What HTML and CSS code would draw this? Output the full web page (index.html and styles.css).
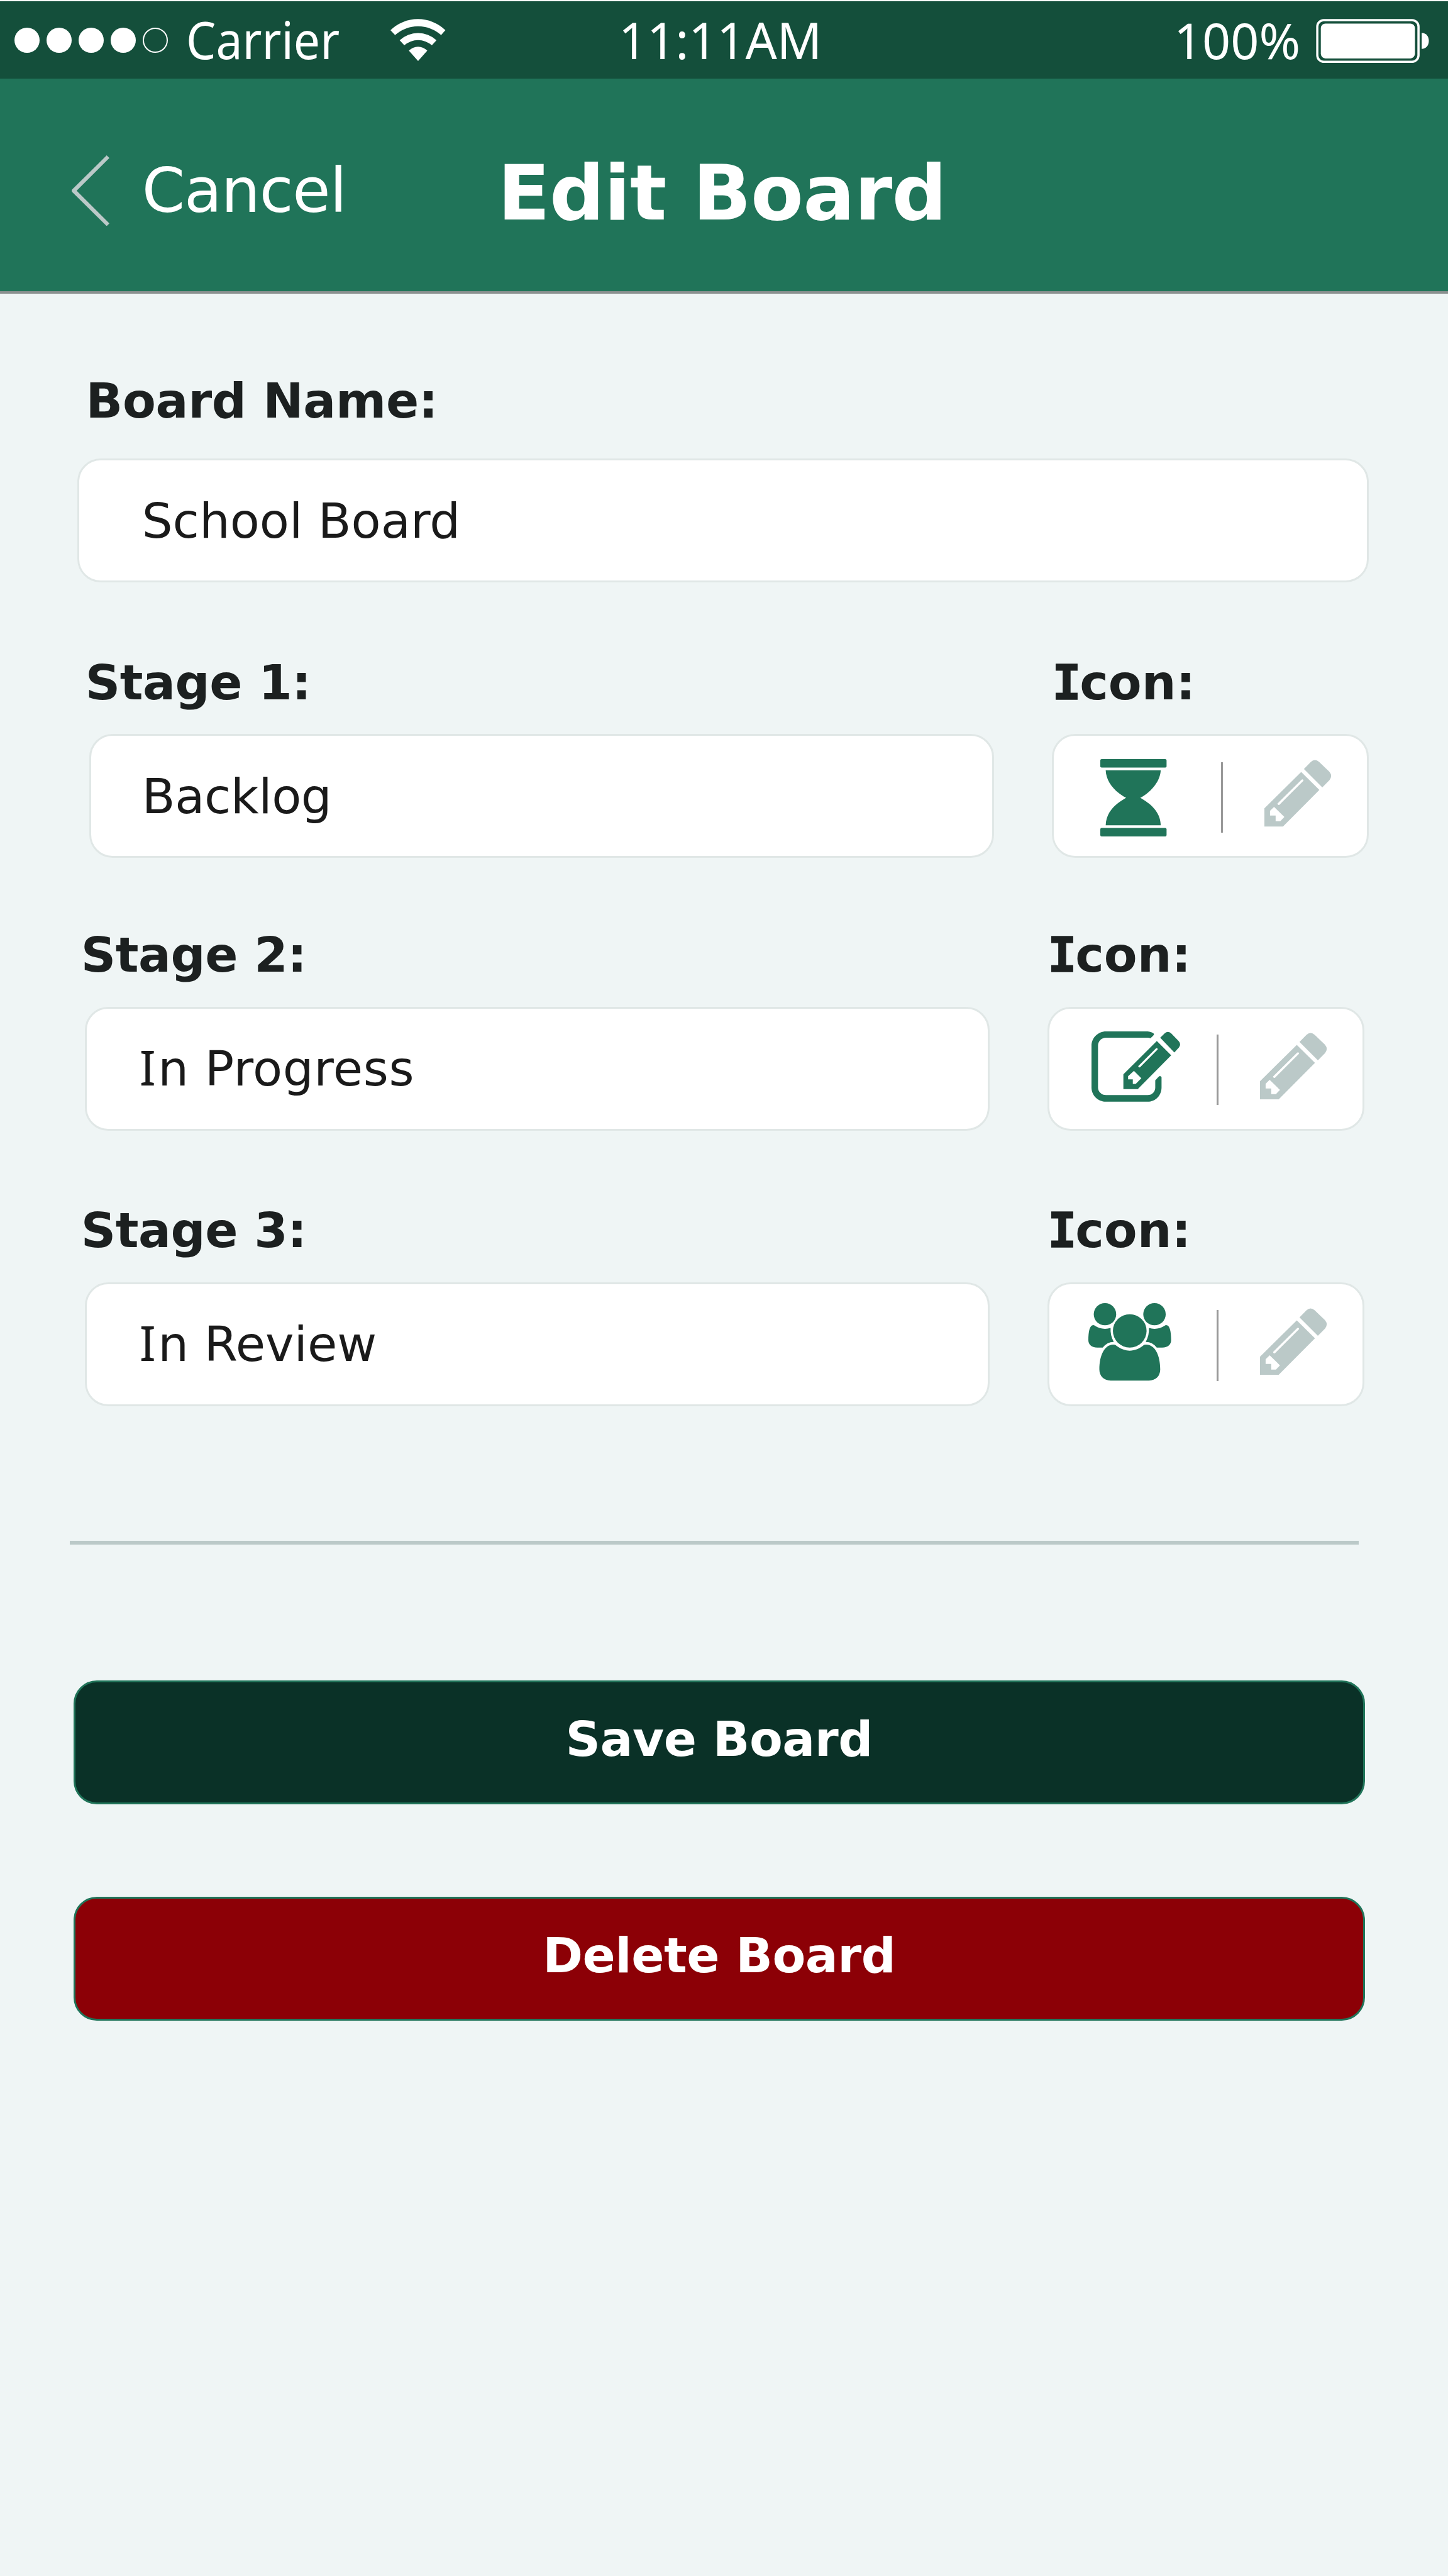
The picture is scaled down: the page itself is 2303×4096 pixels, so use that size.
FILE: index.html
```html
<!DOCTYPE html>
<html lang="en">
<head>
<meta charset="utf-8">
<title>Edit Board</title>
<link rel="stylesheet" href="styles.css">
</head>
<body>
<svg class="defs" aria-hidden="true">
  <symbol id="pencil" viewBox="1009 718 299 434" preserveAspectRatio="none">
    <path fill-rule="evenodd" d="M1185 778L1216 732Q1234 708 1253 732L1299 796Q1314 823 1299 850L1267 897ZM1173 797L1254 914L1091 1152H1009V1033ZM1174 848L1067 1002Q1069 1014 1075 1011L1183 855V850Q1179 841 1174 848ZM1052 1024L1034 1049V1080H1059V1116H1080L1098 1089Z"/>
  </symbol>
</svg>

<div class="status-bar">
  <div class="signal">
    <span class="dot"></span><span class="dot"></span><span class="dot"></span><span class="dot"></span><span class="dot dot-empty"></span>
  </div>
  <span class="carrier">Carrier</span>
  <svg class="wifi" viewBox="843 40 119 91">
    <path d="M843 64.4A85.4 85.4 0 0 1 961.7 64.4L952.5 75A74.6 74.6 0 0 0 853 75ZM862.9 86.3A58.6 58.6 0 0 1 942.5 86.3L932.5 97.2A45 45 0 0 0 872.9 97.2ZM882.8 108.6A27.8 27.8 0 0 1 922.6 108.6L902.7 130.9Z"/>
  </svg>
  <span class="clock">11:11AM</span>
  <span class="percent">100%</span>
  <svg class="battery" viewBox="2840 40 244 96">
    <rect class="battery-case" x="2842.8" y="42.8" width="218.6" height="90" rx="14"/>
    <rect x="2850.4" y="50.1" width="203.3" height="75.3" rx="10"/>
    <path d="M3068.3 70.3C3077 70.3 3083.7 77 3083.7 87.5S3077 104.8 3068.3 104.8Z"/>
  </svg>
</div>

<header class="nav-bar">
  <svg class="chevron" viewBox="154.5 334.6 81.6 152.8">
    <path d="M230.2 334.6L236.1 340.1L165.2 410.8L236.1 481.5L230.2 487.4L155.5 413.5Q153.5 411 155.5 408.2Z"/>
  </svg>
  <span class="cancel">Cancel</span>
  <h1 class="title">Edit Board</h1>
</header>

<main class="form">
  <div class="label board-label">Board Name:</div>
  <div class="field board-field">School Board</div>

  <section class="stage stage-1">
    <div class="label">Stage 1:</div>
    <div class="label icon-label"><span class="cap-i">I</span>con:</div>
    <div class="field">Backlog</div>
    <div class="icon-box">
      <svg class="hourglass" viewBox="279 711 295 501" preserveAspectRatio="none">
        <rect x="279" y="711" width="295" height="55" rx="6" ry="8"/>
        <rect x="279" y="1157" width="295" height="55" rx="6" ry="8"/>
        <path d="M303 783H548C546 850 510 920 457 962C510 1005 547 1060 548 1140H303C305 1060 340 1005 394 962C340 920 305 855 303 783Z"/>
      </svg>
      <span class="divider"></span>
      <svg class="pencil"><use href="#pencil"/></svg>
    </div>
  </section>

  <section class="stage stage-2">
    <div class="label">Stage 2:</div>
    <div class="label icon-label"><span class="cap-i">I</span>con:</div>
    <div class="field"><span class="cap-i">I</span>n Progress</div>
    <div class="icon-box">
      <svg class="compose" viewBox="237 707 396 455" preserveAspectRatio="none">
        <path d="M302 707H487Q505 709 515 722Q518 730 499 752Q495 748 487 748H302C282 748 266 770 266 800V1070C266 1098 282 1119 302 1119H487C507 1119 521 1098 521 1070V1023L537 999Q544 992 549 1003V1070C549 1121 522 1162 487 1162H302C266 1162 237 1121 237 1070V800C237 749 266 707 302 707Z"/>
        <path fill-rule="evenodd" d="M543 748L564 718Q577 702 591 718L625 769Q638 790 626 812L606 843ZM528 769L592 862L443 1080H379V985ZM524 817L445 932Q447 945 454 938L531 825L532 821Q530 811 524 817ZM426 962L400 997V1017H421V1047H434L459 1010Z"/>
      </svg>
      <span class="divider"></span>
      <svg class="pencil"><use href="#pencil"/></svg>
    </div>
  </section>

  <section class="stage stage-3">
    <div class="label">Stage 3:</div>
    <div class="label icon-label"><span class="cap-i">I</span>con:</div>
    <div class="field"><span class="cap-i">I</span>n Review</div>
    <div class="icon-box">
      <svg class="people" viewBox="225 665 369 502" preserveAspectRatio="none">
        <ellipse cx="299" cy="737" rx="50" ry="72"/>
        <ellipse cx="519.5" cy="737" rx="50" ry="72"/>
        <ellipse cx="409.3" cy="845" rx="75" ry="108"/>
        <path id="side" d="M247 808Q251 808 254 812Q275 832 299 832Q312 832 324 826Q322 875 338 916Q308 916 289 953H265C238 953 225 930 225 905C225 850 231 808 247 808Z"/>
        <use href="#side" transform="translate(818.6 0) scale(-1 1)"/>
        <path d="M335 934Q344 933 347 938C367 961 388 973 409 973C430 973 452 961 471 938Q474 933 483 934C520 934 545 1000 545 1095C545 1137 525 1167 495 1167H324C294 1167 274 1137 274 1095C274 1000 298 936 335 934Z"/>
      </svg>
      <span class="divider"></span>
      <svg class="pencil"><use href="#pencil"/></svg>
    </div>
  </section>

  <hr class="rule">
  <button class="button save">Save Board</button>
  <button class="button delete">Delete Board</button>
</main>
</body>
</html>
```
FILE: styles.css
```css
* { box-sizing: border-box; }

body {
  margin: 0;
  width: 2303px;
  height: 4096px;
  overflow: hidden;
  background: #eff5f5;
  color: #1c2020;
  font-family: "DejaVu Sans", Verdana, sans-serif;
}

.defs { display: block; width: 0; height: 0; }

/* Status bar */
.status-bar {
  display: flex;
  align-items: flex-start;
  height: 125px;
  border-top: 2px solid #fbfdfd;
  background: #144f3b;
  color: #fff;
  fill: #fff;
  font-family: "Noto Sans", sans-serif;
  white-space: nowrap;
}
.signal { display: flex; gap: 11.1px; width: 273.5px; margin: 42.4px 0 0 22.5px; }
.dot { width: 40px; height: 40px; border-radius: 50%; background: #fff; }
.dot-empty { background: none; border: 2px solid #fff; }
.carrier { width: 325.3px; font-size: 82px; line-height: 121px; transform: scaleX(.915); transform-origin: left; }
.wifi { width: 87.6px; height: 67px; margin-top: 27.5px; }
.clock { width: 883px; margin-left: 275px; font-size: 80px; line-height: 122px; transform: scaleX(.985); transform-origin: left; }
.percent { width: 226.5px; font-size: 79px; line-height: 124px; }
.battery { width: 179.8px; height: 70.7px; margin-top: 27.5px; }
.battery-case { fill: none; stroke: #fff; stroke-width: 4.8; }

/* Navigation bar */
.nav-bar {
  display: flex;
  align-items: flex-start;
  height: 342px;
  padding-left: 114px;
  border-bottom: 4px solid #8a908f;
  background: #207459;
  color: #fff;
  line-height: 338px;
  white-space: nowrap;
}
.chevron { width: 60px; height: 112.6px; margin-top: 121.6px; fill: #bbc9c8; }
.cancel { width: 565.7px; margin: 9px 0 0 51.7px; font-size: 98px; letter-spacing: -1.2px; }
.title { margin: 12.5px 0 0; font-size: 122px; font-weight: bold; letter-spacing: -.6px; }

/* Form */
.form { padding-top: 121.4px; }
.label { font-size: 77px; font-weight: bold; line-height: 100px; white-space: nowrap; }
.board-label { margin-left: 136.5px; letter-spacing: -.3px; }
.field, .icon-box {
  height: 197px;
  border: 3px solid #e0e7e6;
  border-radius: 37px;
  background: #fff;
}
.field { padding: 1px 0 0 79.7px; color: #1a1a1a; font-size: 77px; line-height: 191px; white-space: nowrap; }
.board-field { width: 2054px; margin: 41.1px 0 0 123px; padding-left: 99.7px; }

.stage {
  display: grid;
  grid-template-columns: 1438.5px 503.7px;
  column-gap: 92.5px;
  row-gap: 31.7px;
  margin-left: 135.3px;
}
.stage .label { margin-left: -6.5px; letter-spacing: -.5px; }
.stage .icon-label { margin-left: 0; letter-spacing: 0; }
.stage-1 { margin: 109.2px 0 0 142.3px; }
.stage-1 .field { padding-left: 80.5px; letter-spacing: -.4px; }
.stage-2 { margin-top: 104.6px; }
.stage-3 { margin-top: 109.6px; }
.stage-2 .field, .stage-3 .field { padding-top: 0; padding-left: 83.5px; }
.stage-2 .field { letter-spacing: .6px; }

/* Capital I with slab serifs */
.cap-i { font-family: "Noto Sans", sans-serif; letter-spacing: 3.4px; line-height: 0; }
.label .cap-i { font-family: "DejaVu Sans Mono", monospace; letter-spacing: -2.5px; -webkit-text-stroke: 1.5px #1c2020; }

.icon-box { display: flex; align-items: flex-start; fill: #207459; }
.hourglass { width: 105.4px; height: 123px; margin: 36.3px 86.1px 0 74.2px; }
.compose { width: 141.4px; height: 111.8px; margin: 36.8px 57.9px 0 66.4px; }
.people { width: 131.8px; height: 123.3px; margin: 30.4px 71.9px 0 62px; }
.divider { width: 3.5px; height: 112.5px; margin-top: 41.3px; background: #999; }
.pencil { width: 106.7px; height: 106.5px; margin: 38px 0 0 65.7px; fill: #bbc9c8; }

.rule { width: 2050px; height: 6px; margin: 214px 0 0 111px; border: 0; background: #bbc9c8; }

.button {
  display: block;
  width: 2054.5px;
  height: 197px;
  margin-left: 116.5px;
  padding: 0 0 10px;
  border: 3px solid #207459;
  border-radius: 37px;
  color: #fff;
  font: bold 77px/181px "DejaVu Sans", Verdana, sans-serif;
  letter-spacing: -.5px;
}
.save { margin-top: 215.9px; background: #0a3127; }
.delete { margin-top: 146.8px; background: #8c0006; }
```
